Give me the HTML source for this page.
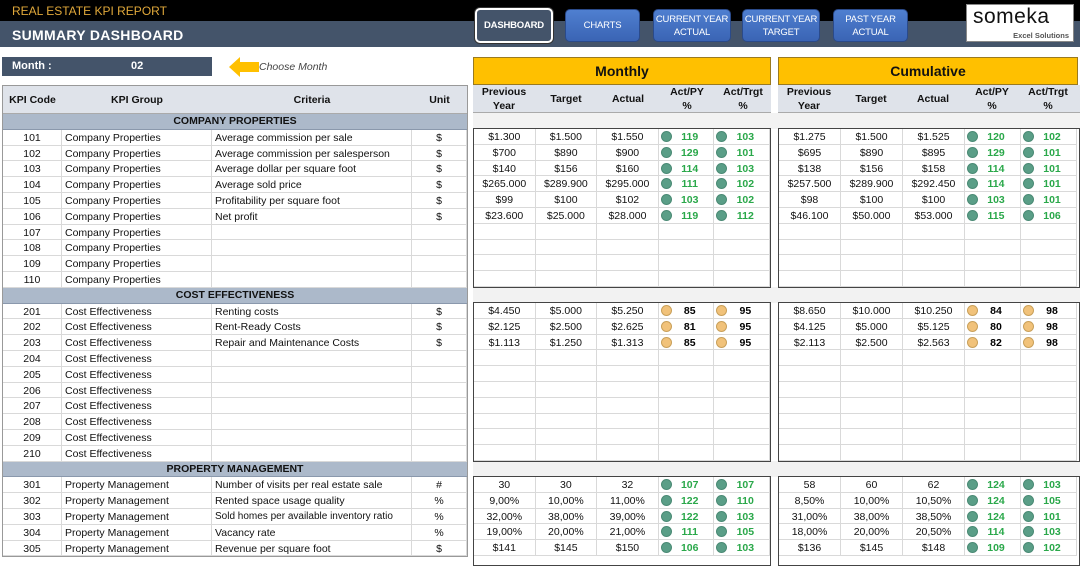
<!DOCTYPE html>
<html><head><meta charset="utf-8"><style>
*{margin:0;padding:0;box-sizing:border-box}
body{width:1080px;height:554px;overflow:hidden;background:#fff;font-family:"Liberation Sans",sans-serif;font-size:10.5px;color:#111;position:relative}
.abs{position:absolute}
.top{left:0;top:0;width:1080px;height:21px;background:#000}
.title1{left:12px;top:4px;color:#e0a83a;font-size:12px}
.band{left:0;top:21px;width:1080px;height:26px;background:#44546a}
.title2{left:12px;top:27px;color:#fff;font-weight:bold;font-size:14px;letter-spacing:.3px}
.btn{top:9px;height:33px;border-radius:5px;background:linear-gradient(#4f7fd0,#3a64b4);border:1px solid #2a4a8a;color:#fff;font-size:9.5px;display:flex;align-items:center;justify-content:center;text-align:center;line-height:13px;white-space:nowrap;letter-spacing:-.2px}
.dash{background:#44546a;border:2px solid #fff;font-weight:bold;top:8px;height:35px;box-shadow:0 0 0 1px #333}
.logo{left:966px;top:4px;width:108px;height:38px;background:#fff;border:1px solid #888}
.month{left:2px;top:57px;width:210px;height:19px;background:#44546a;color:#fff;font-weight:bold;font-size:11px}
.lt{left:2px;top:85px;width:466px;border:1px solid #999}
.row{display:flex;height:15.8px;line-height:16px}
.c{border-right:1px solid #d9d9d9;border-bottom:1px solid #d9d9d9;overflow:hidden;white-space:nowrap;position:relative}
.cc{text-align:center}
.lp{padding-left:3px}
.hd{height:28px;line-height:28px;background:#dfe3ea;font-weight:bold;border-bottom:1px solid #aaa}
.hd .c{border-right:none;border-bottom:none}
.grp{background:#acb9ca;font-weight:bold;text-align:center;height:15.8px;line-height:15.8px;border-bottom:1px solid #8a98ac}
.w1{width:59px}.w2{width:150px}.w3{width:200px}.w4{width:55px}
.yh{top:57px;height:28px;background:#ffc000;border:1px solid #9a7a20;font-weight:bold;font-size:14px;text-align:center;line-height:26px}
.rh{top:85px;height:28px;background:#dfe3ea;font-weight:bold;display:flex;border-bottom:1px solid #aaa}
.rh div{text-align:center;line-height:14px}
.gap{background:#f2f2f2;height:16px}
.box{border:1px solid #444;background:#fff}
.m1{width:62px}.m4{width:56px}
.d i{position:absolute;left:2px;top:2px;width:11px;height:11px;border-radius:50%}
.d b{position:absolute;left:16px;width:30px;text-align:center}
.g i{background:#5a9e87;border:1px solid #4a8a74}
.g b{color:#2aa84a}
.o i{background:#f1c27a;border:1px solid #c9a05a}
.o b{color:#000}
</style></head><body>
<div class="abs top"></div>
<div class="abs title1">REAL ESTATE KPI REPORT</div>
<div class="abs band"></div>
<div class="abs title2">SUMMARY DASHBOARD</div>
<div class="abs btn dash" style="left:475px;width:78px">DASHBOARD</div>
<div class="abs btn" style="left:565px;width:75px">CHARTS</div>
<div class="abs btn" style="left:653px;width:78px">CURRENT YEAR<br>ACTUAL</div>
<div class="abs btn" style="left:742px;width:78px">CURRENT YEAR<br>TARGET</div>
<div class="abs btn" style="left:833px;width:75px">PAST YEAR<br>ACTUAL</div>
<div class="abs logo"><div style="position:absolute;left:6px;top:0px;font-size:21px;color:#111;letter-spacing:.5px">someka</div><div style="position:absolute;right:4px;top:26px;font-size:7.5px;font-weight:bold;color:#555">Excel Solutions</div></div>

<div class="abs month"><span style="position:absolute;left:10px;top:3px">Month :</span><span style="position:absolute;left:129px;top:3px">02</span></div>
<svg class="abs" style="left:229px;top:57px" width="30" height="20"><polygon points="0,10 11,0 11,5 30,5 30,15 11,15 11,20" fill="#ffc000"/></svg>
<div class="abs" style="left:259px;top:61px;font-style:italic;color:#444;font-size:10.5px">Choose Month</div>

<div class="abs lt">
<div class="row hd"><div class="c cc w1">KPI Code</div><div class="c cc w2">KPI Group</div><div class="c cc w3">Criteria</div><div class="c cc w4">Unit</div></div>
<div class="grp">COMPANY PROPERTIES</div>
<div class="row"><div class="c cc w1">101</div><div class="c lp w2">Company Properties</div><div class="c lp w3">Average commission per sale</div><div class="c cc w4">$</div></div>
<div class="row"><div class="c cc w1">102</div><div class="c lp w2">Company Properties</div><div class="c lp w3">Average commission per salesperson</div><div class="c cc w4">$</div></div>
<div class="row"><div class="c cc w1">103</div><div class="c lp w2">Company Properties</div><div class="c lp w3">Average dollar per square foot</div><div class="c cc w4">$</div></div>
<div class="row"><div class="c cc w1">104</div><div class="c lp w2">Company Properties</div><div class="c lp w3">Average sold price</div><div class="c cc w4">$</div></div>
<div class="row"><div class="c cc w1">105</div><div class="c lp w2">Company Properties</div><div class="c lp w3">Profitability per square foot</div><div class="c cc w4">$</div></div>
<div class="row"><div class="c cc w1">106</div><div class="c lp w2">Company Properties</div><div class="c lp w3">Net profit</div><div class="c cc w4">$</div></div>
<div class="row"><div class="c cc w1">107</div><div class="c lp w2">Company Properties</div><div class="c lp w3"></div><div class="c cc w4"></div></div>
<div class="row"><div class="c cc w1">108</div><div class="c lp w2">Company Properties</div><div class="c lp w3"></div><div class="c cc w4"></div></div>
<div class="row"><div class="c cc w1">109</div><div class="c lp w2">Company Properties</div><div class="c lp w3"></div><div class="c cc w4"></div></div>
<div class="row"><div class="c cc w1">110</div><div class="c lp w2">Company Properties</div><div class="c lp w3"></div><div class="c cc w4"></div></div>
<div class="grp">COST EFFECTIVENESS</div>
<div class="row"><div class="c cc w1">201</div><div class="c lp w2">Cost Effectiveness</div><div class="c lp w3">Renting costs</div><div class="c cc w4">$</div></div>
<div class="row"><div class="c cc w1">202</div><div class="c lp w2">Cost Effectiveness</div><div class="c lp w3">Rent-Ready Costs</div><div class="c cc w4">$</div></div>
<div class="row"><div class="c cc w1">203</div><div class="c lp w2">Cost Effectiveness</div><div class="c lp w3">Repair and Maintenance Costs</div><div class="c cc w4">$</div></div>
<div class="row"><div class="c cc w1">204</div><div class="c lp w2">Cost Effectiveness</div><div class="c lp w3"></div><div class="c cc w4"></div></div>
<div class="row"><div class="c cc w1">205</div><div class="c lp w2">Cost Effectiveness</div><div class="c lp w3"></div><div class="c cc w4"></div></div>
<div class="row"><div class="c cc w1">206</div><div class="c lp w2">Cost Effectiveness</div><div class="c lp w3"></div><div class="c cc w4"></div></div>
<div class="row"><div class="c cc w1">207</div><div class="c lp w2">Cost Effectiveness</div><div class="c lp w3"></div><div class="c cc w4"></div></div>
<div class="row"><div class="c cc w1">208</div><div class="c lp w2">Cost Effectiveness</div><div class="c lp w3"></div><div class="c cc w4"></div></div>
<div class="row"><div class="c cc w1">209</div><div class="c lp w2">Cost Effectiveness</div><div class="c lp w3"></div><div class="c cc w4"></div></div>
<div class="row"><div class="c cc w1">210</div><div class="c lp w2">Cost Effectiveness</div><div class="c lp w3"></div><div class="c cc w4"></div></div>
<div class="grp">PROPERTY MANAGEMENT</div>
<div class="row"><div class="c cc w1">301</div><div class="c lp w2">Property Management</div><div class="c lp w3">Number of visits per real estate sale</div><div class="c cc w4">#</div></div>
<div class="row"><div class="c cc w1">302</div><div class="c lp w2">Property Management</div><div class="c lp w3">Rented space usage quality</div><div class="c cc w4">%</div></div>
<div class="row"><div class="c cc w1">303</div><div class="c lp w2">Property Management</div><div class="c lp w3" style="font-size:10px">Sold homes per available inventory ratio</div><div class="c cc w4">%</div></div>
<div class="row"><div class="c cc w1">304</div><div class="c lp w2">Property Management</div><div class="c lp w3">Vacancy rate</div><div class="c cc w4">%</div></div>
<div class="row"><div class="c cc w1">305</div><div class="c lp w2">Property Management</div><div class="c lp w3">Revenue per square foot</div><div class="c cc w4">$</div></div>
</div>

<div class="abs yh" style="left:473px;width:298px">Monthly</div>
<div class="abs yh" style="left:778px;width:300px">Cumulative</div>
<div class="abs rh" style="left:473px;width:298px"><div class="m1">Previous<br>Year</div><div class="m1" style="line-height:28px">Target</div><div class="m1" style="line-height:28px">Actual</div><div class="m4">Act/PY<br>%</div><div class="m4">Act/Trgt<br>%</div></div>
<div class="abs rh" style="left:778px;width:302px"><div class="m1">Previous<br>Year</div><div class="m1" style="line-height:28px">Target</div><div class="m1" style="line-height:28px">Actual</div><div class="m4">Act/PY<br>%</div><div class="m4">Act/Trgt<br>%</div></div>
<div class="abs gap" style="left:473px;top:113px;width:607px"></div>
<div class="abs gap" style="left:473px;top:287px;width:607px"></div>
<div class="abs gap" style="left:473px;top:461px;width:607px"></div>

<div class="abs box" style="left:473px;top:128px;width:298px;height:160px">
<div class="row"><div class="c cc m1">$1.300</div><div class="c cc m1">$1.500</div><div class="c cc m1">$1.550</div><div class="c d g m4"><i></i><b>119</b></div><div class="c d g m4"><i></i><b>103</b></div></div>
<div class="row"><div class="c cc m1">$700</div><div class="c cc m1">$890</div><div class="c cc m1">$900</div><div class="c d g m4"><i></i><b>129</b></div><div class="c d g m4"><i></i><b>101</b></div></div>
<div class="row"><div class="c cc m1">$140</div><div class="c cc m1">$156</div><div class="c cc m1">$160</div><div class="c d g m4"><i></i><b>114</b></div><div class="c d g m4"><i></i><b>103</b></div></div>
<div class="row"><div class="c cc m1">$265.000</div><div class="c cc m1">$289.900</div><div class="c cc m1">$295.000</div><div class="c d g m4"><i></i><b>111</b></div><div class="c d g m4"><i></i><b>102</b></div></div>
<div class="row"><div class="c cc m1">$99</div><div class="c cc m1">$100</div><div class="c cc m1">$102</div><div class="c d g m4"><i></i><b>103</b></div><div class="c d g m4"><i></i><b>102</b></div></div>
<div class="row"><div class="c cc m1">$23.600</div><div class="c cc m1">$25.000</div><div class="c cc m1">$28.000</div><div class="c d g m4"><i></i><b>119</b></div><div class="c d g m4"><i></i><b>112</b></div></div>
<div class="row"><div class="c m1"></div><div class="c m1"></div><div class="c m1"></div><div class="c m4"></div><div class="c m4"></div></div>
<div class="row"><div class="c m1"></div><div class="c m1"></div><div class="c m1"></div><div class="c m4"></div><div class="c m4"></div></div>
<div class="row"><div class="c m1"></div><div class="c m1"></div><div class="c m1"></div><div class="c m4"></div><div class="c m4"></div></div>
<div class="row"><div class="c m1"></div><div class="c m1"></div><div class="c m1"></div><div class="c m4"></div><div class="c m4"></div></div>
</div>
<div class="abs box" style="left:778px;top:128px;width:302px;height:160px">
<div class="row"><div class="c cc m1">$1.275</div><div class="c cc m1">$1.500</div><div class="c cc m1">$1.525</div><div class="c d g m4"><i></i><b>120</b></div><div class="c d g m4"><i></i><b>102</b></div></div>
<div class="row"><div class="c cc m1">$695</div><div class="c cc m1">$890</div><div class="c cc m1">$895</div><div class="c d g m4"><i></i><b>129</b></div><div class="c d g m4"><i></i><b>101</b></div></div>
<div class="row"><div class="c cc m1">$138</div><div class="c cc m1">$156</div><div class="c cc m1">$158</div><div class="c d g m4"><i></i><b>114</b></div><div class="c d g m4"><i></i><b>101</b></div></div>
<div class="row"><div class="c cc m1">$257.500</div><div class="c cc m1">$289.900</div><div class="c cc m1">$292.450</div><div class="c d g m4"><i></i><b>114</b></div><div class="c d g m4"><i></i><b>101</b></div></div>
<div class="row"><div class="c cc m1">$98</div><div class="c cc m1">$100</div><div class="c cc m1">$100</div><div class="c d g m4"><i></i><b>103</b></div><div class="c d g m4"><i></i><b>101</b></div></div>
<div class="row"><div class="c cc m1">$46.100</div><div class="c cc m1">$50.000</div><div class="c cc m1">$53.000</div><div class="c d g m4"><i></i><b>115</b></div><div class="c d g m4"><i></i><b>106</b></div></div>
<div class="row"><div class="c m1"></div><div class="c m1"></div><div class="c m1"></div><div class="c m4"></div><div class="c m4"></div></div>
<div class="row"><div class="c m1"></div><div class="c m1"></div><div class="c m1"></div><div class="c m4"></div><div class="c m4"></div></div>
<div class="row"><div class="c m1"></div><div class="c m1"></div><div class="c m1"></div><div class="c m4"></div><div class="c m4"></div></div>
<div class="row"><div class="c m1"></div><div class="c m1"></div><div class="c m1"></div><div class="c m4"></div><div class="c m4"></div></div>
</div>
<div class="abs box" style="left:473px;top:302px;width:298px;height:160px">
<div class="row"><div class="c cc m1">$4.450</div><div class="c cc m1">$5.000</div><div class="c cc m1">$5.250</div><div class="c d o m4"><i></i><b>85</b></div><div class="c d o m4"><i></i><b>95</b></div></div>
<div class="row"><div class="c cc m1">$2.125</div><div class="c cc m1">$2.500</div><div class="c cc m1">$2.625</div><div class="c d o m4"><i></i><b>81</b></div><div class="c d o m4"><i></i><b>95</b></div></div>
<div class="row"><div class="c cc m1">$1.113</div><div class="c cc m1">$1.250</div><div class="c cc m1">$1.313</div><div class="c d o m4"><i></i><b>85</b></div><div class="c d o m4"><i></i><b>95</b></div></div>
<div class="row"><div class="c m1"></div><div class="c m1"></div><div class="c m1"></div><div class="c m4"></div><div class="c m4"></div></div>
<div class="row"><div class="c m1"></div><div class="c m1"></div><div class="c m1"></div><div class="c m4"></div><div class="c m4"></div></div>
<div class="row"><div class="c m1"></div><div class="c m1"></div><div class="c m1"></div><div class="c m4"></div><div class="c m4"></div></div>
<div class="row"><div class="c m1"></div><div class="c m1"></div><div class="c m1"></div><div class="c m4"></div><div class="c m4"></div></div>
<div class="row"><div class="c m1"></div><div class="c m1"></div><div class="c m1"></div><div class="c m4"></div><div class="c m4"></div></div>
<div class="row"><div class="c m1"></div><div class="c m1"></div><div class="c m1"></div><div class="c m4"></div><div class="c m4"></div></div>
<div class="row"><div class="c m1"></div><div class="c m1"></div><div class="c m1"></div><div class="c m4"></div><div class="c m4"></div></div>
</div>
<div class="abs box" style="left:778px;top:302px;width:302px;height:160px">
<div class="row"><div class="c cc m1">$8.650</div><div class="c cc m1">$10.000</div><div class="c cc m1">$10.250</div><div class="c d o m4"><i></i><b>84</b></div><div class="c d o m4"><i></i><b>98</b></div></div>
<div class="row"><div class="c cc m1">$4.125</div><div class="c cc m1">$5.000</div><div class="c cc m1">$5.125</div><div class="c d o m4"><i></i><b>80</b></div><div class="c d o m4"><i></i><b>98</b></div></div>
<div class="row"><div class="c cc m1">$2.113</div><div class="c cc m1">$2.500</div><div class="c cc m1">$2.563</div><div class="c d o m4"><i></i><b>82</b></div><div class="c d o m4"><i></i><b>98</b></div></div>
<div class="row"><div class="c m1"></div><div class="c m1"></div><div class="c m1"></div><div class="c m4"></div><div class="c m4"></div></div>
<div class="row"><div class="c m1"></div><div class="c m1"></div><div class="c m1"></div><div class="c m4"></div><div class="c m4"></div></div>
<div class="row"><div class="c m1"></div><div class="c m1"></div><div class="c m1"></div><div class="c m4"></div><div class="c m4"></div></div>
<div class="row"><div class="c m1"></div><div class="c m1"></div><div class="c m1"></div><div class="c m4"></div><div class="c m4"></div></div>
<div class="row"><div class="c m1"></div><div class="c m1"></div><div class="c m1"></div><div class="c m4"></div><div class="c m4"></div></div>
<div class="row"><div class="c m1"></div><div class="c m1"></div><div class="c m1"></div><div class="c m4"></div><div class="c m4"></div></div>
<div class="row"><div class="c m1"></div><div class="c m1"></div><div class="c m1"></div><div class="c m4"></div><div class="c m4"></div></div>
</div>
<div class="abs box" style="left:473px;top:476px;width:298px;height:90px">
<div class="row"><div class="c cc m1">30</div><div class="c cc m1">30</div><div class="c cc m1">32</div><div class="c d g m4"><i></i><b>107</b></div><div class="c d g m4"><i></i><b>107</b></div></div>
<div class="row"><div class="c cc m1">9,00%</div><div class="c cc m1">10,00%</div><div class="c cc m1">11,00%</div><div class="c d g m4"><i></i><b>122</b></div><div class="c d g m4"><i></i><b>110</b></div></div>
<div class="row"><div class="c cc m1">32,00%</div><div class="c cc m1">38,00%</div><div class="c cc m1">39,00%</div><div class="c d g m4"><i></i><b>122</b></div><div class="c d g m4"><i></i><b>103</b></div></div>
<div class="row"><div class="c cc m1">19,00%</div><div class="c cc m1">20,00%</div><div class="c cc m1">21,00%</div><div class="c d g m4"><i></i><b>111</b></div><div class="c d g m4"><i></i><b>105</b></div></div>
<div class="row"><div class="c cc m1">$141</div><div class="c cc m1">$145</div><div class="c cc m1">$150</div><div class="c d g m4"><i></i><b>106</b></div><div class="c d g m4"><i></i><b>103</b></div></div>
</div>
<div class="abs box" style="left:778px;top:476px;width:302px;height:90px">
<div class="row"><div class="c cc m1">58</div><div class="c cc m1">60</div><div class="c cc m1">62</div><div class="c d g m4"><i></i><b>124</b></div><div class="c d g m4"><i></i><b>103</b></div></div>
<div class="row"><div class="c cc m1">8,50%</div><div class="c cc m1">10,00%</div><div class="c cc m1">10,50%</div><div class="c d g m4"><i></i><b>124</b></div><div class="c d g m4"><i></i><b>105</b></div></div>
<div class="row"><div class="c cc m1">31,00%</div><div class="c cc m1">38,00%</div><div class="c cc m1">38,50%</div><div class="c d g m4"><i></i><b>124</b></div><div class="c d g m4"><i></i><b>101</b></div></div>
<div class="row"><div class="c cc m1">18,00%</div><div class="c cc m1">20,00%</div><div class="c cc m1">20,50%</div><div class="c d g m4"><i></i><b>114</b></div><div class="c d g m4"><i></i><b>103</b></div></div>
<div class="row"><div class="c cc m1">$136</div><div class="c cc m1">$145</div><div class="c cc m1">$148</div><div class="c d g m4"><i></i><b>109</b></div><div class="c d g m4"><i></i><b>102</b></div></div>
</div>
</body></html>
